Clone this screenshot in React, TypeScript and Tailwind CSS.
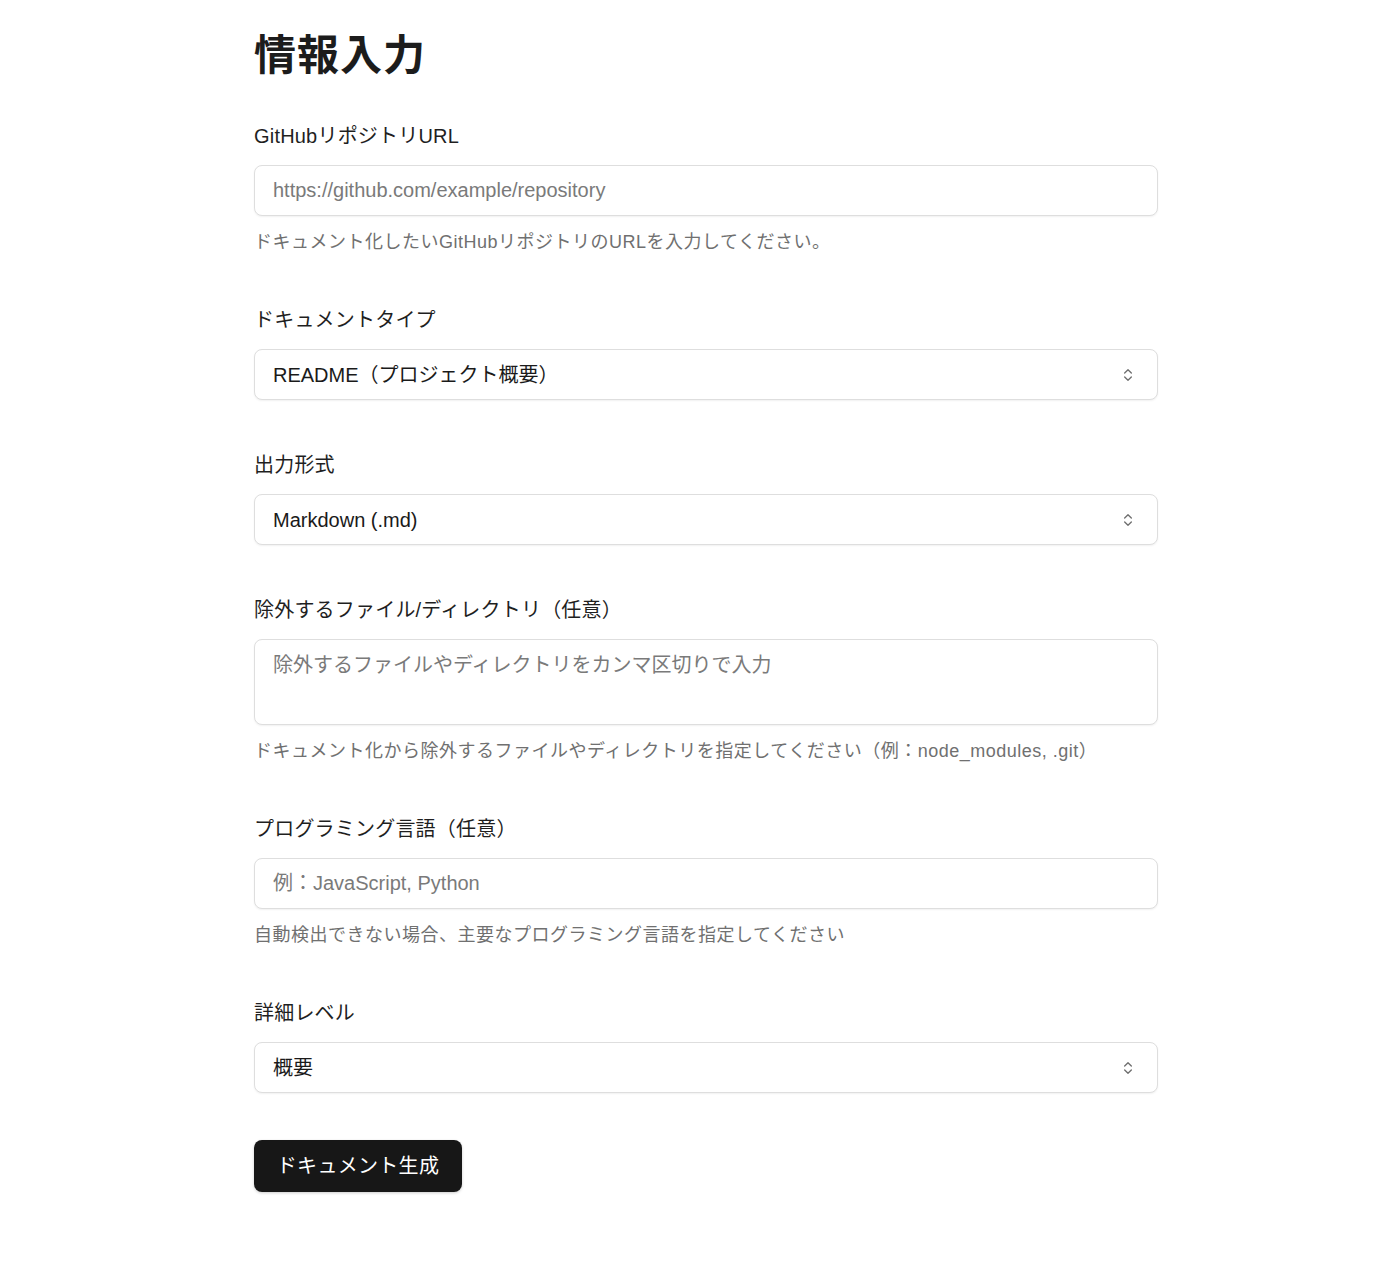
import React, { useState } from 'react';
import { ChevronsUpDown } from 'lucide-react';

const font = { fontFamily: '"Liberation Sans", "Noto Sans CJK JP", sans-serif' };

function Field({ label, help, children }: { label: string; help?: string; children: React.ReactNode }) {
  return (
    <div className="flex flex-col">
      <label className="text-[20px] leading-[30px] tracking-[0.2px] text-[#1f1f1f] mb-[14px]">{label}</label>
      {children}
      {help && <p className="mt-[13px] text-[18px] leading-[26px] tracking-[0.5px] text-[#707070]">{help}</p>}
    </div>
  );
}

function SelectBox({ value, options, onChange }: { value: string; options: string[]; onChange: (v: string) => void }) {
  return (
    <div className="relative">
      <select
        value={value}
        onChange={(e) => onChange(e.target.value)}
        className="w-full h-[51px] appearance-none rounded-lg border border-[#dedede] bg-white px-[18px] text-[20px] text-[#1a1a1a] shadow-[0_1px_2px_rgba(0,0,0,0.06)] outline-none"
      >
        {options.map((o) => (
          <option key={o}>{o}</option>
        ))}
      </select>
      <ChevronsUpDown className="absolute right-[22px] top-1/2 -translate-y-1/2 w-[16px] h-[16px] text-[#6f6f6f] pointer-events-none" strokeWidth={2} />
    </div>
  );
}

export default function App() {
  const [docType, setDocType] = useState('README（プロジェクト概要）');
  const [format, setFormat] = useState('Markdown (.md)');
  const [level, setLevel] = useState('概要');

  const inputCls =
    'w-full h-[51px] rounded-lg border border-[#dedede] bg-white px-[18px] text-[20px] text-[#1a1a1a] placeholder:text-[#7a7a7a] shadow-[0_1px_2px_rgba(0,0,0,0.06)] outline-none';

  return (
    <div className="min-h-screen bg-white" style={font}>
      <div className="w-[904px] ml-[254px] pt-[31px] pb-[72px]">
        <h1 className="text-[42px] leading-[50px] font-bold tracking-[1px] text-[#1c1c1c] mb-[40px]">情報入力</h1>

        <div className="flex flex-col gap-[50px]">
          <Field label="GitHubリポジトリURL" help="ドキュメント化したいGitHubリポジトリのURLを入力してください。">
            <input className={inputCls} placeholder="https://github.com/example/repository" />
          </Field>

          <Field label="ドキュメントタイプ">
            <SelectBox
              value={docType}
              onChange={setDocType}
              options={['README（プロジェクト概要）', 'APIドキュメント', 'アーキテクチャ概要']}
            />
          </Field>

          <Field label="出力形式">
            <SelectBox value={format} onChange={setFormat} options={['Markdown (.md)', 'HTML (.html)', 'PDF (.pdf)']} />
          </Field>

          <Field
            label="除外するファイル/ディレクトリ（任意）"
            help="ドキュメント化から除外するファイルやディレクトリを指定してください（例：node_modules, .git）"
          >
            <textarea
              className="w-full h-[86px] resize-none rounded-lg border border-[#dedede] bg-white px-[18px] py-[10px] text-[20px] leading-[30px] text-[#1a1a1a] placeholder:text-[#7a7a7a] shadow-[0_1px_2px_rgba(0,0,0,0.06)] outline-none"
              placeholder="除外するファイルやディレクトリをカンマ区切りで入力"
            />
          </Field>

          <Field label="プログラミング言語（任意）" help="自動検出できない場合、主要なプログラミング言語を指定してください">
            <input className={inputCls} placeholder="例：JavaScript, Python" />
          </Field>

          <Field label="詳細レベル">
            <SelectBox value={level} onChange={setLevel} options={['概要', '標準', '詳細']} />
          </Field>
        </div>

        <button className="mt-[47px] h-[52px] w-[208px] rounded-lg bg-[#171717] text-[20px] tracking-[0.3px] text-white shadow-[0_1px_3px_rgba(0,0,0,0.2)]">
          ドキュメント生成
        </button>
      </div>
    </div>
  );
}
